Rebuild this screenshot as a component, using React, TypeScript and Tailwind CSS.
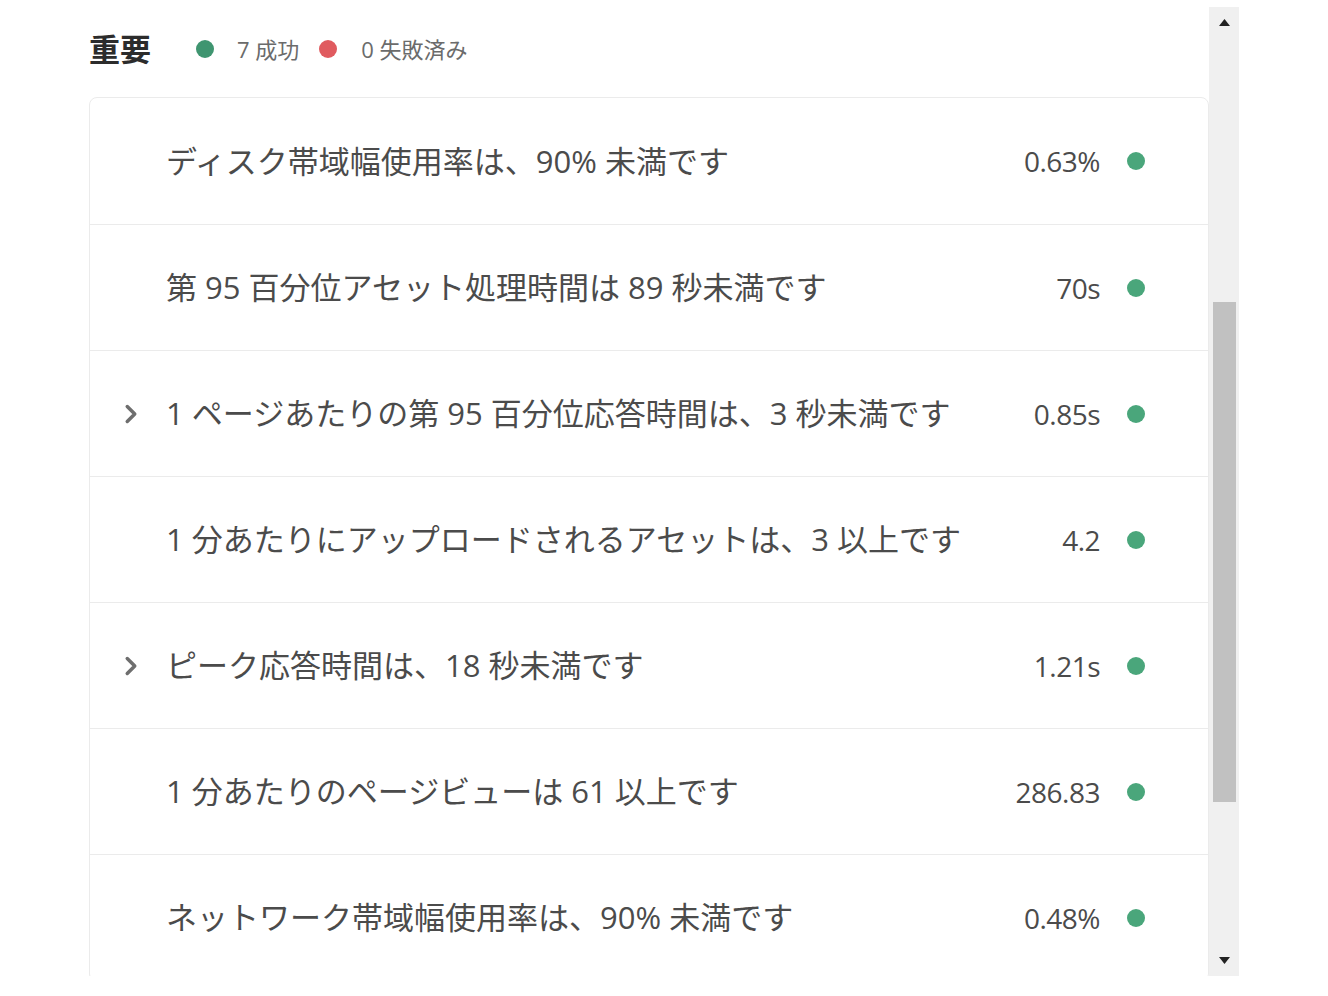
import { ChevronRight } from "lucide-react";

type Check = { label: string; value: string; expandable?: boolean };

const checks: Check[] = [
  { label: "ディスク帯域幅使用率は、90% 未満です", value: "0.63%" },
  { label: "第 95 百分位アセット処理時間は 89 秒未満です", value: "70s" },
  { label: "1 ページあたりの第 95 百分位応答時間は、3 秒未満です", value: "0.85s", expandable: true },
  { label: "1 分あたりにアップロードされるアセットは、3 以上です", value: "4.2" },
  { label: "ピーク応答時間は、18 秒未満です", value: "1.21s", expandable: true },
  { label: "1 分あたりのページビューは 61 以上です", value: "286.83" },
  { label: "ネットワーク帯域幅使用率は、90% 未満です", value: "0.48%" },
];

const font = { fontFamily: '"Open Sans", "Noto Sans CJK JP", sans-serif' };

function CheckRow({ check }: { check: Check }) {
  return (
    <div className="flex h-[126px] shrink-0 items-center border-b border-[#ebebeb] first:h-[127px]">
      <div className="flex w-[76px] justify-end pr-[20px]">
        {check.expandable && (
          <ChevronRight className="h-[30px] w-[30px] text-[#6e6e6e]" strokeWidth={2.8} />
        )}
      </div>
      <div className="flex-1 text-[31px] text-[#4b4b4b]">{check.label}</div>
      <div className="text-[28px] tracking-[-0.5px] text-[#4b4b4b]">{check.value}</div>
      <div className="ml-[27px] mr-[63px] h-[18px] w-[18px] rounded-full bg-[#4aa67b]" />
    </div>
  );
}

export default function App() {
  return (
    <div className="min-h-[996px] bg-white pl-[89px] pt-[7px]" style={font}>
      <div className="flex">
        <div className="h-[969px] w-[1120px] overflow-hidden">
          <div className="flex h-[90px] items-center pb-[6px]">
            <span className="text-[31px] font-bold text-[#2c2c2c]">重要</span>
            <span className="ml-[45px] h-[18px] w-[18px] rounded-full bg-[#3f9570]" />
            <span className="ml-[23px] text-[22px] text-[#6b6b6b]">7 成功</span>
            <span className="ml-[20px] h-[18px] w-[18px] rounded-full bg-[#e05b5f]" />
            <span className="ml-[24px] text-[22px] text-[#6b6b6b]">0 失敗済み</span>
          </div>
          <div className="flex flex-col rounded-[8px] border border-[#ebebeb]">
            {checks.map((c) => (
              <CheckRow key={c.label} check={c} />
            ))}
          </div>
        </div>
        <div className="flex h-[969px] w-[30px] flex-col items-center bg-[#f0f0f0]">
          <div className="flex h-[30px] items-center justify-center">
            <svg width="11" height="7" viewBox="0 0 11 7">
              <path d="M5.5 0 L11 7 L0 7 Z" fill="#222" />
            </svg>
          </div>
          <div className="mt-[265px] h-[500px] w-[23px] bg-[#c1c1c1]" />
          <div className="flex-1" />
          <div className="flex h-[30px] items-center justify-center pb-[2px]">
            <svg width="11" height="7" viewBox="0 0 11 7">
              <path d="M0 0 L11 0 L5.5 7 Z" fill="#222" />
            </svg>
          </div>
        </div>
      </div>
    </div>
  );
}
